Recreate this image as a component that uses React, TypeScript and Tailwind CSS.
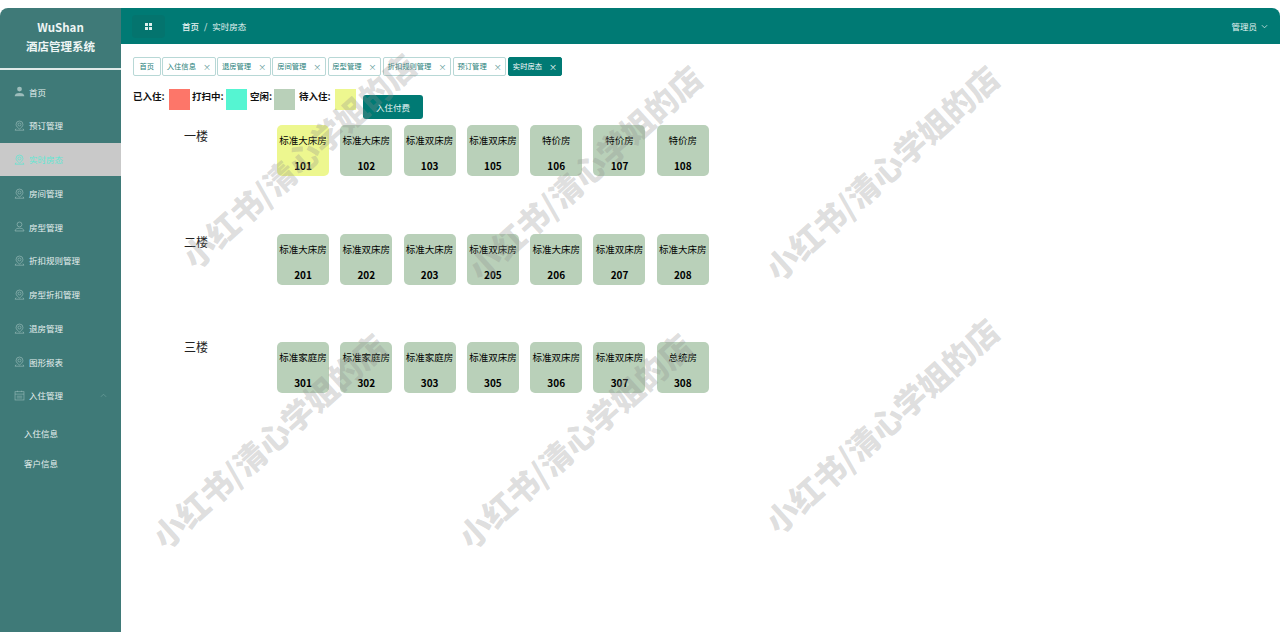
import React from "react";

const FONT = "font-['Noto_Sans_CJK_SC','Noto_Sans',sans-serif]";

function PinIcon({ color = "#8fb5b2" }: { color?: string }) {
  return (
    <svg width="11" height="11" viewBox="0 0 16 16" fill="none" stroke={color} strokeWidth="1.1">
      <path d="M8 1.500a5 5 0 0 1 5 5c0 2.600-2.600 5-5 6.500-2.400-1.500-5-3.900-5-6.500a5 5 0 0 1 5-5z" />
      <circle cx="8" cy="6.500" r="2.200" />
      <path d="M3 12.500 1.500 14.800h13L13 12.500" />
    </svg>
  );
}

function UserFill() {
  return (
    <svg width="11" height="11" viewBox="0 0 16 16" fill="#9dbdbb">
      <circle cx="8" cy="4.500" r="3.500" />
      <path d="M1 15c0-3.500 2.500-5 7-5s7 1.500 7 5z" />
    </svg>
  );
}

function UserLine() {
  return (
    <svg width="11" height="11" viewBox="0 0 16 16" fill="none" stroke="#8fb5b2" strokeWidth="1.1">
      <circle cx="8" cy="5" r="3.500" />
      <path d="M1.500 14.500c.5-3 3-4 6.500-4s6 1 6.500 4z" />
    </svg>
  );
}

function CalIcon() {
  return (
    <svg width="11" height="11" viewBox="0 0 16 16" fill="none" stroke="#8fb5b2" strokeWidth="1">
      <rect x="1.500" y="2.500" width="13" height="12" />
      <path d="M1.500 6h13M4 9h8M4 11.500h8M5 1v2M11 1v2" />
    </svg>
  );
}

const menu = [
  { label: "首页", icon: <UserFill /> },
  { label: "预订管理", icon: <PinIcon /> },
  { label: "实时房态", icon: <PinIcon color="#5fe6d2" />, active: true },
  { label: "房间管理", icon: <PinIcon /> },
  { label: "房型管理", icon: <UserLine /> },
  { label: "折扣规则管理", icon: <PinIcon /> },
  { label: "房型折扣管理", icon: <PinIcon /> },
  { label: "退房管理", icon: <PinIcon /> },
  { label: "图形报表", icon: <PinIcon /> },
];

const tags: [string, number, boolean?][] = [
  ["首页", 27.5],
  ["入住信息", 53.7],
  ["退房管理", 53.7],
  ["房间管理", 53.7],
  ["房型管理", 53.7],
  ["折扣规则管理", 68.5],
  ["预订管理", 53.7],
  ["实时房态", 54, true],
];

const floors: { name: string; labelClass: string; rooms: [string, string, boolean?][] }[] = [
  {
    name: "一楼",
    labelClass: "mt-[2px]",
    rooms: [
      ["标准大床房", "101", true],
      ["标准大床房", "102"],
      ["标准双床房", "103"],
      ["标准双床房", "105"],
      ["特价房", "106"],
      ["特价房", "107"],
      ["特价房", "108"],
    ],
  },
  {
    name: "二楼",
    labelClass: "-mt-[1px]",
    rooms: [
      ["标准大床房", "201"],
      ["标准双床房", "202"],
      ["标准大床房", "203"],
      ["标准双床房", "205"],
      ["标准大床房", "206"],
      ["标准双床房", "207"],
      ["标准大床房", "208"],
    ],
  },
  {
    name: "三楼",
    labelClass: "-mt-[4px]",
    rooms: [
      ["标准家庭房", "301"],
      ["标准家庭房", "302"],
      ["标准家庭房", "303"],
      ["标准双床房", "305"],
      ["标准双床房", "306"],
      ["标准双床房", "307"],
      ["总统房", "308"],
    ],
  },
];

const legend = [
  ["已入住:", "bg-[#fd7669]", "w-[36px]", ""],
  ["打扫中:", "bg-[#55f5d2]", "w-[34px]", "ml-[2px]"],
  ["空闲:", "bg-[#b9d0b9]", "w-[24px]", "ml-[3px]"],
  ["待入住:", "bg-[#edf78f]", "w-[36px]", "ml-[4px]"],
];

const marks: [string, string][] = [
  ["left-[298px]", "top-[160px]"],
  ["left-[584px]", "top-[172px]"],
  ["left-[881px]", "top-[172px]"],
  ["left-[268px]", "top-[440px]"],
  ["left-[574px]", "top-[440px]"],
  ["left-[881px]", "top-[425px]"],
];

export default function App() {
  return (
    <div className={`relative h-[640px] w-[1280px] overflow-hidden bg-white py-2 ${FONT}`}>
      <div className="flex h-[624px]">
        <aside className="flex w-[121px] shrink-0 flex-col rounded-tl-lg bg-[#3f7a78] text-[#e6f0ef]">
          <div className="flex h-[62px] flex-col items-center justify-center border-b-2 border-[#dfe9e8] pb-[3px] text-[11.500px] font-bold leading-[19px] text-[#eef5f4]">
            <div>WuShan</div>
            <div>酒店管理系统</div>
          </div>
          <nav className="mt-[5px] flex flex-col">
            {menu.map((m) => (
              <div
                key={m.label}
                className={`flex h-[33.750px] items-center gap-[4px] pl-[14px] text-[8.500px] ${
                  m.active ? "bg-[#c9c9c9] text-[#63e6d3]" : ""
                }`}
              >
                {m.icon}
                <span>{m.label}</span>
              </div>
            ))}
            <div className="flex h-[33.750px] items-center gap-[4px] pl-[14px] pr-[14px] text-[8.500px]">
              <CalIcon />
              <span>入住管理</span>
              <svg className="ml-auto" width="7" height="5" viewBox="0 0 8 5" fill="none" stroke="#6fa09d" strokeWidth="0.800">
                <path d="M1 4l3-3 3 3" />
              </svg>
            </div>
            <div className="mt-[6px] flex h-[30px] items-center pl-[24px] text-[8.500px]">入住信息</div>
            <div className="flex h-[30px] items-center pl-[24px] text-[8.500px]">客户信息</div>
          </nav>
        </aside>

        <main className="flex min-w-0 flex-1 flex-col">
          <header className="flex h-[36px] shrink-0 items-center rounded-tr-lg bg-[#007a74] pr-[12px] text-[8.500px] text-[#e8f4f3]">
            <div className="ml-[11px] flex h-[23px] w-[33px] items-center justify-center rounded-sm bg-[#04746e]">
              <svg width="7" height="7" viewBox="0 0 8 8" fill="#dff0ee">
                <rect width="3.400" height="3.400" />
                <rect x="4.600" width="3.400" height="3.400" />
                <rect y="4.600" width="3.400" height="3.400" />
                <rect x="4.600" y="4.600" width="3.400" height="3.400" />
              </svg>
            </div>
            <div className="ml-[17px] flex items-center gap-[5px]">
              <span className="font-medium">首页</span>
              <span>/</span>
              <span>实时房态</span>
            </div>
            <div className="ml-auto flex items-center gap-[4px]">
              <span>管理员</span>
              <svg width="7" height="5" viewBox="0 0 8 5" fill="none" stroke="#dcecea" strokeWidth="0.900">
                <path d="M1 1l3 3 3-3" />
              </svg>
            </div>
          </header>

          <div className="pl-[12px] pt-[13px]">
            <div className="flex gap-[1.500px]">
              {tags.map(([t, w, on]) => (
                <div
                  key={t}
                  style={{ width: w }}
                  className={`flex h-[19px] items-center justify-center gap-[7px] rounded-[2px] border text-[7.300px] ${
                    on ? "border-[#007a74] bg-[#007a74] text-white" : "border-[#b8d8d6] bg-white text-[#1f7f7a]"
                  }`}
                >
                  <span className="whitespace-nowrap">{t}</span>
                  {t !== "首页" && <span className={`text-[8px] leading-none ${on ? "text-white" : "text-[#5c9996]"}`}>×</span>}
                </div>
              ))}
            </div>

            <div className="mt-[13px] flex items-start">
              {legend.map(([l, c, w, m]) => (
                <div key={l} className={`flex items-start ${m}`}>
                  <span className={`${w} mt-[1px] whitespace-nowrap text-[9.500px] font-bold leading-[12px] text-[#111]`}>{l}</span>
                  <div className={`h-[21px] w-[21px] ${c}`} />
                </div>
              ))}
              <button className="ml-[7px] mt-[6px] flex h-[24px] w-[60px] items-center justify-center rounded-[3px] bg-[#007a74] text-[8.500px] text-[#e8f4f3]">
                入住付费
              </button>
            </div>

            <div className="mt-[6px] flex flex-col gap-[57.500px]">
              {floors.map((f) => (
                <div key={f.name} className="flex items-start">
                  <div className={`ml-[51px] w-[93px] text-[12px] leading-[17px] text-[#222] ${f.labelClass}`}>{f.name}</div>
                  <div className="flex gap-[11.300px]">
                    {f.rooms.map(([type, no, pending]) => (
                      <div
                        key={no}
                        className={`flex h-[51px] w-[52px] flex-col items-center rounded-[5px] pb-[4px] pt-[8px] text-black ${
                          pending ? "bg-[#edf78f]" : "bg-[#b9d0b9]"
                        }`}
                      >
                        <span className="whitespace-nowrap text-[9.500px] leading-[14px]">{type}</span>
                        <span className="mt-auto text-[10px] font-bold leading-[12px]">{no}</span>
                      </div>
                    ))}
                  </div>
                </div>
              ))}
            </div>
          </div>
        </main>
      </div>

      {marks.map(([l, t], i) => (
        <div
          key={i}
          className={`pointer-events-none absolute ${l} ${t} -translate-x-1/2 -translate-y-1/2 -rotate-[42deg] whitespace-nowrap text-[32px] font-black leading-none text-[#8e8e8e]/30`}
        >
          小红书/清心学姐的店
        </div>
      ))}
    </div>
  );
}
